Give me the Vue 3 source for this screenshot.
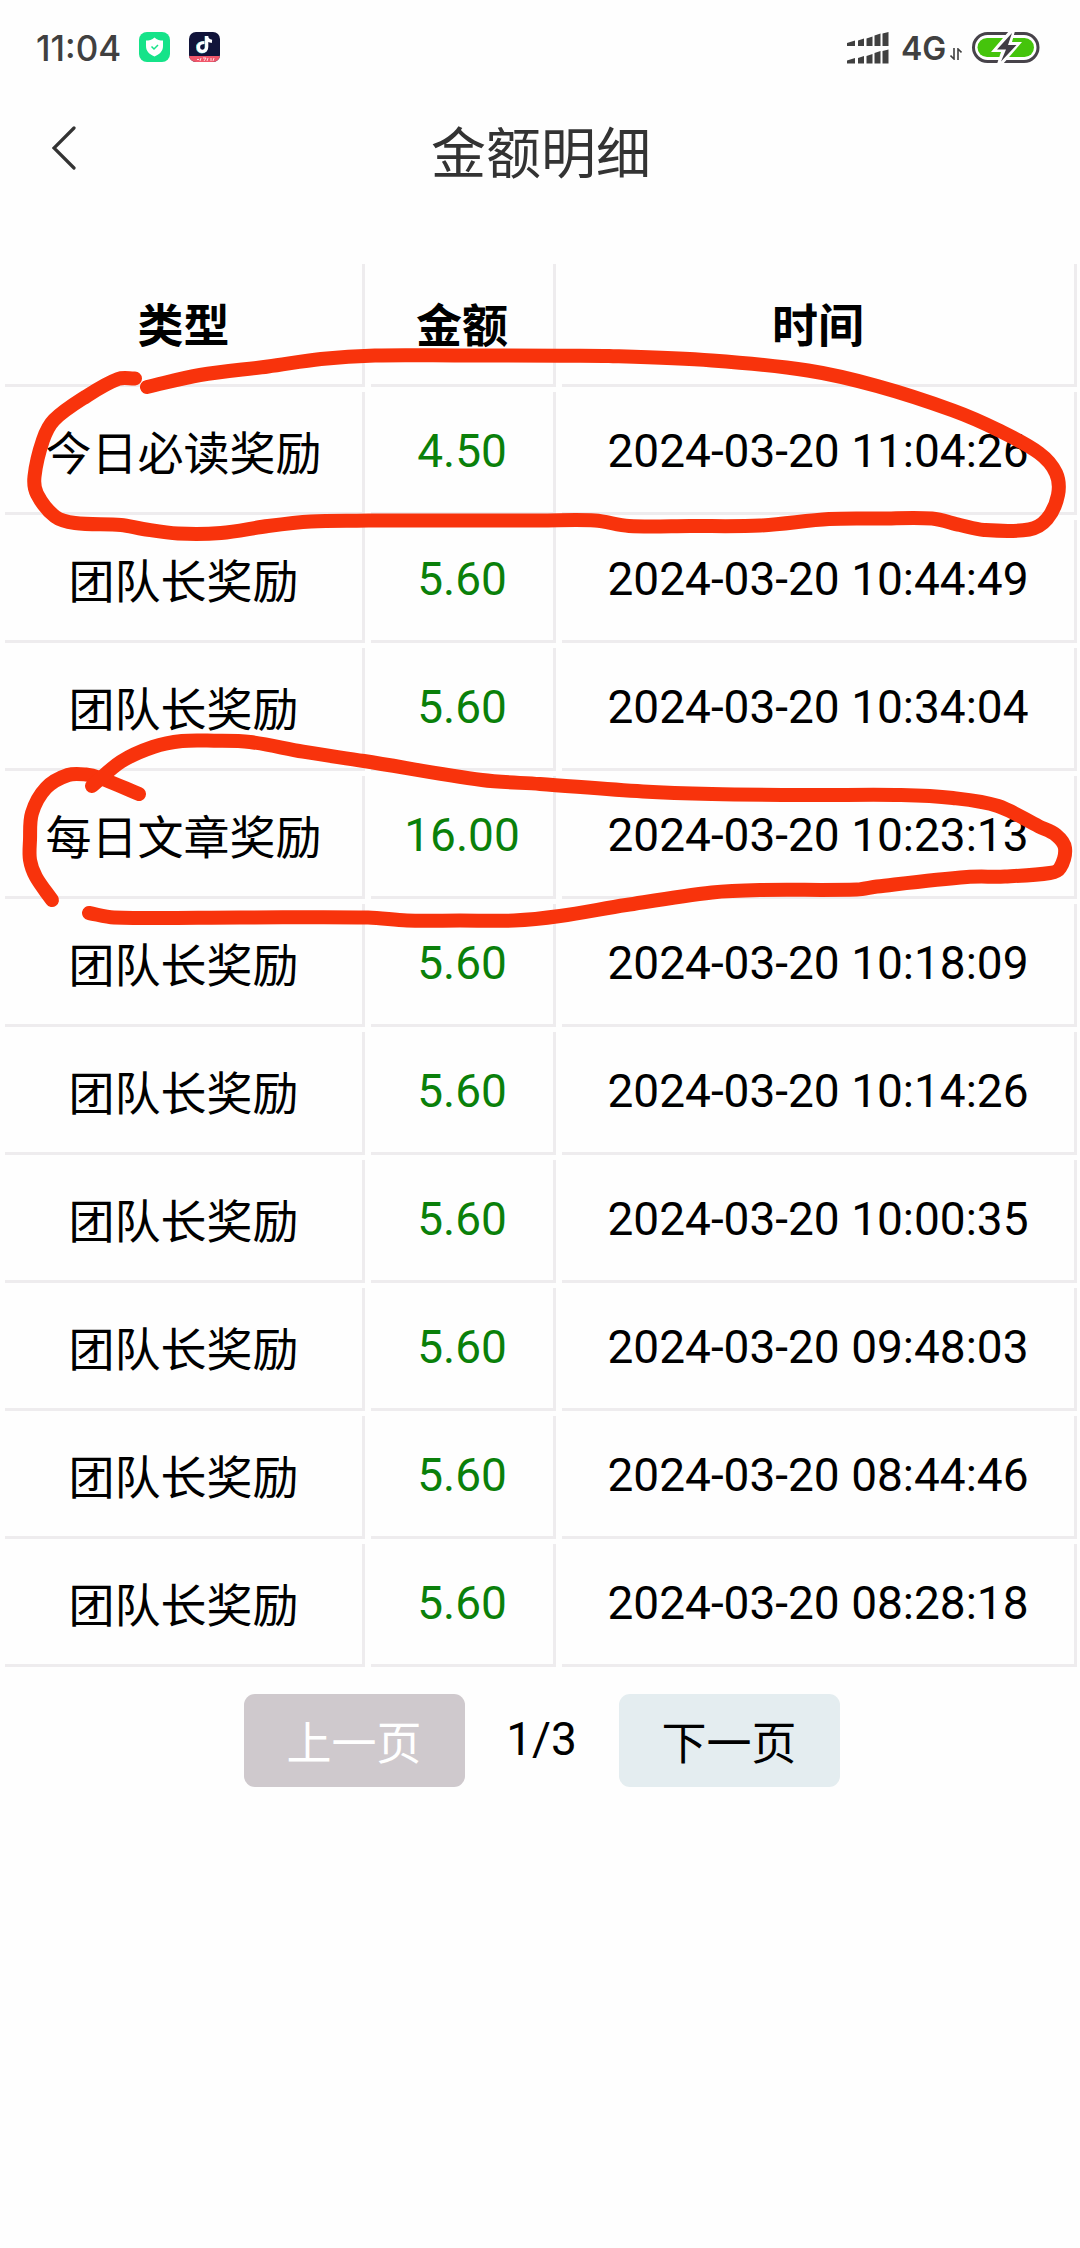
<!--
  App.vue
  金额明细页面
-->
<template>
  <div class="page">
    <div class="status-bar">
      <div class="status-left">
        <span class="clock">11:04</span>
        <svg class="app-icon" viewBox="0 0 31 30">
          <rect width="31" height="30" rx="8" fill="#15e389" />
          <path d="M15.500 5.500C13 8 10 8.500 7 8.500V14C7 19 10 22 15.500 24.500C21 22 24 19 24 14V8.500C21 8.500 18 8 15.500 5.500Z" fill="#fff" />
          <path d="M12.500 14.500l2.500 2.500 4-4" fill="none" stroke="#15e389" stroke-width="1.500" />
        </svg>
        <svg class="app-icon second" viewBox="0 0 31 30">
          <defs>
            <clipPath id="round"><rect width="31" height="30" rx="7" /></clipPath>
          </defs>
          <g clip-path="url(#round)">
            <rect width="31" height="30" fill="#11143a" />
            <rect y="24" width="31" height="6" fill="#f0566a" />
            <path d="M8 27.500h2m2-1.500l-1 3m3-3h3l-2 3m4-3l-1 3m4-3v3m3-3l-1 3" stroke="#ffd9dd" stroke-width="1" fill="none" />
          </g>
          <g fill="none" stroke-width="3.200">
            <path d="M14.500 10.500c-3.500 0-6 2-6 4.800c0 3 2 4.500 4.200 4.500c3 0 4.500-2 4.500-4.500V4" stroke="#62d9e4" />
            <path d="M15.500 10.500c-3.500 0-6 2-6 4.800c0 2.500 1.500 4 3.700 4c3 0 4.500-2 4.500-4.500V4c0 3 2.200 5 5.300 5.300" stroke="#fff" />
          </g>
        </svg>
      </div>
      <div class="status-right">
        <svg class="signal" viewBox="0 0 42 32" fill="#404040">
          <path d="M0 11l8-2.500v5.500H0zM11 8.500l6-2v7.500h-6zM19.500 6.500l6-2v9.500h-6zM27.500 3.500l6-2v12.500h-6zM35.500 1.500l6-1.500v14h-6z" />
          <path d="M0 28.500l8-2.500v5.500H0zM11 26l6-2v7.500h-6zM19.500 24l6-2v9.500h-6zM27.500 21l6-2v12.500h-6zM35.500 19l6-1.500v14h-6z" />
        </svg>
        <span class="network">4G</span>
        <svg class="updown" viewBox="0 0 12 12" fill="none" stroke="#404040" stroke-width="1.600">
          <path d="M4 0v11L.5 7.500M8 12V1l3.500 3.500" />
        </svg>
        <svg class="battery" viewBox="0 0 68 31">
          <rect x="1.500" y="1.500" width="64.500" height="28" rx="14" fill="#fff" stroke="#47434a" stroke-width="3" />
          <rect x="5.500" y="6" width="56.500" height="19" rx="9.500" fill="#45c40c" />
          <path d="M37 -1L19 20H29L25 32H31L50 10H40L43 -1Z" fill="#fff" />
          <path d="M40 1L25 17.500H34L29 29.500L44.500 13H36Z" fill="#403c44" />
        </svg>
      </div>
    </div>

    <div class="nav-bar">
      <svg class="back" viewBox="0 0 24 44">
        <path d="M22 2L2 22L22 42" fill="none" stroke="#333" stroke-width="3.200" stroke-linecap="round" />
      </svg>
      <div class="title">金额明细</div>
    </div>

    <table class="detail-table">
      <colgroup>
        <col class="col-type" />
        <col class="col-amount" />
        <col class="col-time" />
      </colgroup>
      <thead>
        <tr>
          <th>类型</th>
          <th>金额</th>
          <th>时间</th>
        </tr>
      </thead>
      <tbody>
        <tr v-for="row in rows" :key="row.time">
          <td class="type">{{ row.type }}</td>
          <td class="amount">{{ row.amount }}</td>
          <td>{{ row.time }}</td>
        </tr>
      </tbody>
    </table>

    <div class="pager">
      <button class="page-btn disabled">上一页</button>
      <span class="page-num">1/3</span>
      <button class="page-btn">下一页</button>
    </div>

    <!-- 手绘标记 -->
    <svg class="marks" viewBox="0 0 1080 2248">
      <path v-for="(mark, i) in marks" :key="i" :d="smooth(mark)" />
    </svg>
  </div>
</template>

<script setup>
const rows = [
  { type: '今日必读奖励', amount: '4.50', time: '2024-03-20 11:04:26' },
  { type: '团队长奖励', amount: '5.60', time: '2024-03-20 10:44:49' },
  { type: '团队长奖励', amount: '5.60', time: '2024-03-20 10:34:04' },
  { type: '每日文章奖励', amount: '16.00', time: '2024-03-20 10:23:13' },
  { type: '团队长奖励', amount: '5.60', time: '2024-03-20 10:18:09' },
  { type: '团队长奖励', amount: '5.60', time: '2024-03-20 10:14:26' },
  { type: '团队长奖励', amount: '5.60', time: '2024-03-20 10:00:35' },
  { type: '团队长奖励', amount: '5.60', time: '2024-03-20 09:48:03' },
  { type: '团队长奖励', amount: '5.60', time: '2024-03-20 08:44:46' },
  { type: '团队长奖励', amount: '5.60', time: '2024-03-20 08:28:18' }
];

const marks = [
  [
    [147, 387], [200, 375], [268, 366.5], [321, 359], [375, 355.5], [460, 355.5], [560, 355.7], [609, 356],
    [712, 360.5], [808, 370.5], [877, 386], [953, 410.5], [998, 430], [1039, 453], [1056, 473], [1058, 495],
    [1047, 519], [1029, 529.5], [984, 530], [960, 525], [932, 518.5], [880, 518.5], [829, 519], [760, 525.5],
    [690, 526], [629, 526], [595, 520.5], [540, 520.5], [440, 520.5], [357, 520.7], [311, 521.5], [268, 526],
    [221, 533], [178, 533.5], [143, 529], [121, 525], [75, 523], [55, 516.5], [37, 494], [34.5, 476.5],
    [43, 440], [54, 420], [86, 396.5], [118, 379], [135, 378.5]
  ],
  [
    [139, 794], [100, 778], [86, 774.5], [68, 775], [46, 788], [32, 813], [30, 840], [30, 860], [36, 877], [52, 900]
  ],
  [
    [92, 786], [121, 761.7], [153, 747], [182, 741], [214, 740.7], [250, 742], [303, 751.7], [364, 761],
    [482, 780], [540, 784], [643, 791.5], [712, 794], [810, 795], [901, 795], [953, 798], [998, 806],
    [1039, 826.5], [1056, 835], [1065, 848], [1060, 868], [1050, 873], [1005, 876.5], [967, 877], [877, 886.5],
    [857, 889.5], [760, 890], [712, 892.5], [626, 905], [560, 916], [514, 920.5], [460, 920.5], [407, 920.5],
    [368, 917.5], [240, 917.5], [114, 917.5], [89, 913]
  ]
];

// 把采样点连成平滑曲线
function smooth(points) {
  let d = `M${points[0][0]} ${points[0][1]}`;
  for (let i = 0; i < points.length - 1; i++) {
    const p0 = points[i - 1] || points[i];
    const p1 = points[i];
    const p2 = points[i + 1];
    const p3 = points[i + 2] || p2;
    // 控制柄不超过线段长度的三分之一，避免过冲
    const len = Math.hypot(p2[0] - p1[0], p2[1] - p1[1]) / 3;
    const a = Math.hypot(p2[0] - p0[0], p2[1] - p0[1]);
    const b = Math.hypot(p3[0] - p1[0], p3[1] - p1[1]);
    const c1 = [p1[0] + ((p2[0] - p0[0]) / a) * len, p1[1] + ((p2[1] - p0[1]) / a) * len];
    const c2 = [p2[0] - ((p3[0] - p1[0]) / b) * len, p2[1] - ((p3[1] - p1[1]) / b) * len];
    d += `C${c1.join(' ')} ${c2.join(' ')} ${p2.join(' ')}`;
  }
  return d;
}
</script>

<style>
body {
  margin: 0;
  background: #fefefe;
}
</style>

<style scoped>
.page {
  position: relative;
  width: 1080px;
  height: 2248px;
  overflow: hidden;
  background: #fefefe;
  color: #000;
  font-family: Roboto, "Noto Sans CJK SC", sans-serif;
}
.status-bar {
  display: flex;
  justify-content: space-between;
  height: 96px;
  padding: 0 40px 0 36px;
}
.status-left,
.status-right {
  display: flex;
  align-items: center;
}
.clock {
  width: 103px;
  font-family: Inter, sans-serif;
  font-size: 35px;
  font-weight: 500;
  color: #404040;
}
.app-icon {
  width: 31px;
  height: 30px;
  margin-top: -3px;
}
.app-icon.second {
  margin-left: 19px;
}
.signal {
  width: 42px;
  height: 32px;
}
.network {
  width: 45px;
  margin-left: 12px;
  font-family: Inter, sans-serif;
  font-size: 32px;
  font-weight: 600;
  color: #404040;
}
.updown {
  width: 12px;
  height: 12px;
  margin: 12px 0 0 4px;
}
.battery {
  width: 68px;
  height: 31px;
  margin: -2px 0 0 10px;
}
.nav-bar {
  display: flex;
  align-items: center;
  height: 104px;
  padding: 0 52px;
}
.back {
  width: 24px;
  height: 44px;
}
.title {
  flex: 1;
  margin-right: 22px;
  padding-top: 12px;
  font-size: 55px;
  line-height: 80px;
  text-align: center;
  color: #333;
}
.detail-table {
  width: 1084px;
  margin: 59px 0 0 -1px;
  table-layout: fixed;
  border-collapse: separate;
  border-spacing: 6px 5px;
}
.col-type {
  width: 360px;
}
.col-amount {
  width: 185px;
}
.detail-table th,
.detail-table td {
  box-sizing: border-box;
  height: 123px;
  padding: 0 0 2px;
  border-right: 3px solid #eeecee;
  border-bottom: 3px solid #eeecee;
  font-size: 46px;
  line-height: 60px;
  text-align: center;
  white-space: nowrap;
}
.detail-table th,
.detail-table .type {
  padding: 4px 0 0;
}
.detail-table .amount {
  color: #0a800a;
}
.pager {
  display: flex;
  justify-content: center;
  align-items: center;
  margin-top: 22px;
  padding-left: 3px;
}
.page-btn {
  width: 221px;
  height: 93px;
  padding: 0;
  border: none;
  border-radius: 11px;
  background: #e4edf0;
  color: #000;
  font-family: inherit;
  font-size: 45px;
}
.page-btn.disabled {
  background: #cfc9cd;
  color: #fff;
}
.page-num {
  width: 154px;
  padding-bottom: 4px;
  font-size: 46px;
  text-align: center;
}
.marks {
  position: absolute;
  top: 0;
  left: 0;
  width: 1080px;
  height: 2248px;
  pointer-events: none;
}
.marks path {
  fill: none;
  stroke: #f8330c;
  stroke-width: 14px;
  stroke-linecap: round;
  stroke-linejoin: round;
}
</style>
